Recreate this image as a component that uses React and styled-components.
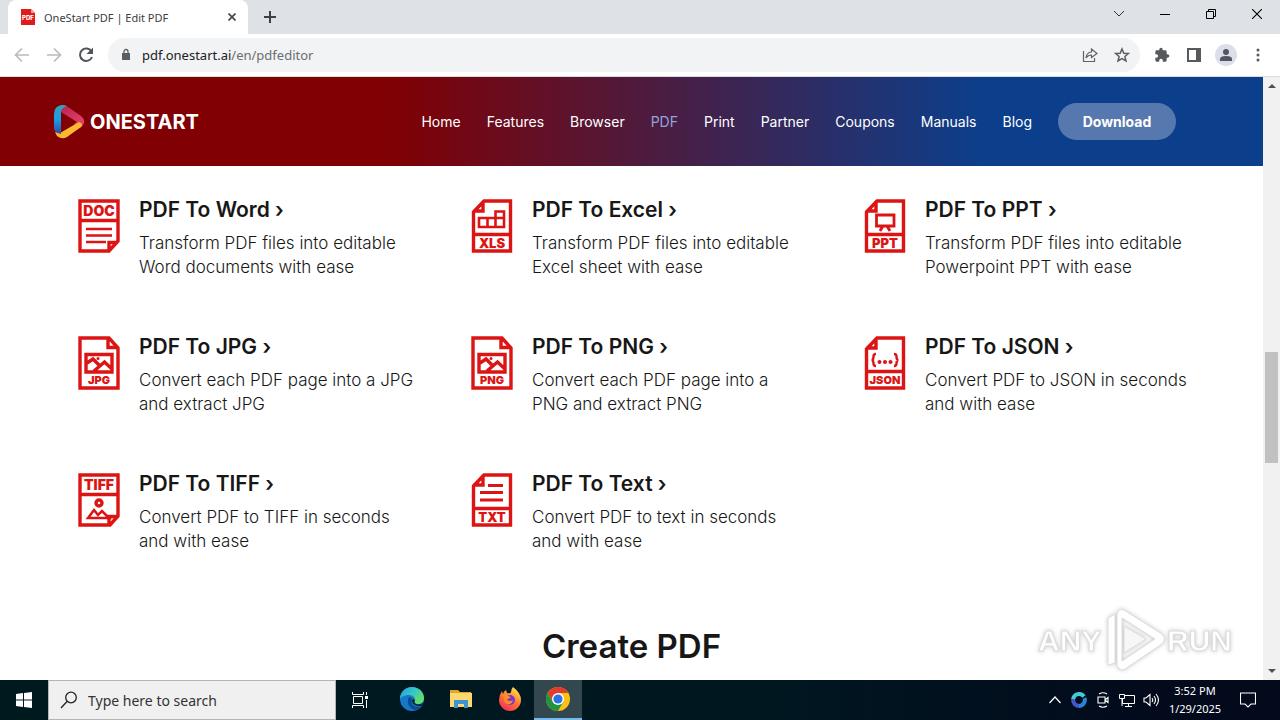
import { useState } from 'react'
import styled, { createGlobalStyle } from 'styled-components'

const RED = '#dd1414'

const navItems = ['Home', 'Features', 'Browser', 'PDF', 'Print', 'Partner', 'Coupons', 'Manuals', 'Blog']

const features = [
  { icon: 'doc', title: 'PDF To Word ›', lines: ['Transform PDF files into editable', 'Word documents with ease'] },
  { icon: 'xls', title: 'PDF To Excel ›', lines: ['Transform PDF files into editable', 'Excel sheet with ease'] },
  { icon: 'ppt', title: 'PDF To PPT ›', lines: ['Transform PDF files into editable', 'Powerpoint PPT with ease'] },
  { icon: 'jpg', title: 'PDF To JPG ›', lines: ['Convert each PDF page into a JPG', 'and extract JPG'] },
  { icon: 'png', title: 'PDF To PNG ›', lines: ['Convert each PDF page into a', 'PNG and extract PNG'] },
  { icon: 'json', title: 'PDF To JSON ›', lines: ['Convert PDF to JSON in seconds', 'and with ease'] },
  { icon: 'tiff', title: 'PDF To TIFF ›', lines: ['Convert PDF to TIFF in seconds', 'and with ease'] },
  { icon: 'txt', title: 'PDF To Text ›', lines: ['Convert PDF to text in seconds', 'and with ease'] },
]

function FileLabel({ y, size = 13, children }) {
  return (
    <text
      x="21"
      y={y}
      fontFamily="Inter, 'Liberation Sans', sans-serif"
      fontSize={size}
      fontWeight="900"
      textAnchor="middle"
      fill={RED}
      stroke="none"
    >
      {children}
    </text>
  )
}

// folded corner top left, label box at the bottom
function LeftFold({ label, size, children }) {
  return (
    <>
      <path d="M13 2H39.5V52H2.5V13Z M12 2V12H2.5 M2.5 35.500H39.5" />
      {children}
      <FileLabel y={size < 12 ? 48 : 49} size={size}>
        {label}
      </FileLabel>
    </>
  )
}

function ImageFile({ label }) {
  return (
    <>
      <path d="M2 2H31L40 12V52H2Z M30 2V11.500H40" />
      <path d="M8 18.500H34V36H8Z M9 27L15 23L21 29 M16 35L26.500 26L34 33" />
      <circle cx="20" cy="22.500" r="1.500" fill={RED} stroke="none" />
      <FileLabel y={48} size={11}>
        {label}
      </FileLabel>
    </>
  )
}

const fileShapes = {
  doc: (
    <>
      <path d="M2 2H40V42L31 52H2Z M2 21.500H40 M31 52V43.500H40" />
      <path d="M8 30H34 M8 36.500H34 M8 43H28" strokeWidth="2.500" />
      <FileLabel y={17} size={14}>DOC</FileLabel>
    </>
  ),
  tiff: (
    <>
      <path d="M2 2H40V43L32 52H2Z M2 21.500H40 M31 51V43.500H39" />
      <circle cx="21" cy="30" r="3" />
      <path d="M10 45L16 37L20 42L24 38L31 45Z" strokeWidth="2.500" />
      <FileLabel y={17} size={14}>TIFF</FileLabel>
    </>
  ),
  xls: (
    <LeftFold label="XLS" size={13}>
      <path d="M8 19H33V28H8Z M16.500 19V28 M24.500 12.500H33V28H24.500Z" strokeWidth="2.600" />
    </LeftFold>
  ),
  ppt: (
    <LeftFold label="PPT" size={13}>
      <path d="M12.500 16H30V27H12.500Z M19 27L16 32 M23 27L26 32" strokeWidth="2.800" />
    </LeftFold>
  ),
  txt: (
    <LeftFold label="TXT" size={13}>
      <path d="M17 12.500H32 M9 19.500H32 M9 27H32" strokeWidth="2.800" />
    </LeftFold>
  ),
  json: (
    <LeftFold label="JSON" size={11}>
      <path d="M12 18Q9.500 18 9.500 20.500Q9.500 24 7.500 24Q9.500 24 9.500 27.500Q9.500 30 12 30 M30 18Q32.500 18 32.500 20.500Q32.500 24 34.500 24Q32.500 24 32.500 27.500Q32.500 30 30 30" strokeWidth="2.400" />
      <g fill={RED} stroke="none">
        <circle cx="15.500" cy="26" r="2" />
        <circle cx="21" cy="26" r="2" />
        <circle cx="26.500" cy="26" r="2" />
      </g>
    </LeftFold>
  ),
  jpg: <ImageFile label="JPG" />,
  png: <ImageFile label="PNG" />,
}

function Feature({ icon, title, lines }) {
  return (
    <FeatureItem>
      <FileIcon viewBox="0 0 42 54" aria-hidden="true">
        {fileShapes[icon]}
      </FileIcon>
      <div>
        <FeatureTitle>
          <a href="#pdf">{title}</a>
        </FeatureTitle>
        <FeatureText>
          {lines[0]}
          <br />
          {lines[1]}
        </FeatureText>
      </div>
    </FeatureItem>
  )
}

function BrowserChrome() {
  const [url, setUrl] = useState('pdf.onestart.ai/en/pdfeditor')
  const [editing, setEditing] = useState(false)

  return (
    <header>
      <TabStrip>
        <Tab>
          <svg width="16" height="16" viewBox="0 0 16 16">
            <path d="M1 0H11L15 4V16H1Z" fill="#e01b1b" />
            <path d="M11 0L15 4H11Z" fill="#f79a9a" />
            <text x="8" y="11" fontSize="6" fontWeight="800" fontFamily="Inter, sans-serif" textAnchor="middle" fill="#fff">PDF</text>
          </svg>
          <TabTitle>OneStart PDF | Edit PDF</TabTitle>
          <ChromeBtn aria-label="Close tab" size={16}>
            <svg width="8" height="8" viewBox="0 0 8 8" stroke="#45494d" strokeWidth="1.700">
              <path d="M0.500 0.500L7.500 7.500M7.500 0.500L0.500 7.500" />
            </svg>
          </ChromeBtn>
        </Tab>
        <ChromeBtn aria-label="New tab" size={28}>
          <svg width="12" height="12" viewBox="0 0 12 12" stroke="#3c4043" strokeWidth="2">
            <path d="M6 0V12M0 6H12" />
          </svg>
        </ChromeBtn>
        <WindowButtons>
          <WindowBtn aria-label="Search tabs">
            <svg width="12" height="8" viewBox="0 0 12 8" fill="none" stroke="#333">
              <path d="M1 1L6 6L11 1" />
            </svg>
          </WindowBtn>
          <WindowBtn aria-label="Minimize">
            <svg width="10" height="10" viewBox="0 0 10 10" stroke="#000">
              <path d="M0 5.500H10" />
            </svg>
          </WindowBtn>
          <WindowBtn aria-label="Restore">
            <svg width="10" height="10" viewBox="0 0 10 10" fill="none" stroke="#000">
              <path d="M0.500 2.500H7.500V9.500H0.500Z M2.500 2.500V0.500H9.500V7.500H7.500" />
            </svg>
          </WindowBtn>
          <WindowBtn aria-label="Close">
            <svg width="10" height="10" viewBox="0 0 10 10" stroke="#000" strokeWidth="1.100">
              <path d="M0 0L10 10M10 0L0 10" />
            </svg>
          </WindowBtn>
        </WindowButtons>
      </TabStrip>
      <Toolbar>
        <ChromeBtn aria-label="Back" size={32}>
          <svg width="16" height="16" viewBox="0 0 16 16" fill="none" stroke="#b9bbbd" strokeWidth="1.700">
            <path d="M15 8H2M8 1.500L1.500 8L8 14.500" />
          </svg>
        </ChromeBtn>
        <ChromeBtn aria-label="Forward" size={32}>
          <svg width="16" height="16" viewBox="0 0 16 16" fill="none" stroke="#b9bbbd" strokeWidth="1.700">
            <path d="M1 8H14M8 1.500L14.500 8L8 14.500" />
          </svg>
        </ChromeBtn>
        <ChromeBtn aria-label="Reload" size={32}>
          <svg width="16" height="16" viewBox="0 0 16 16" fill="none" stroke="#50545a" strokeWidth="2">
            <path d="M13.500 4.500A6.200 6.200 0 1 0 14 10" />
            <path d="M15 0.500V7H8.500Z" fill="#50545a" stroke="none" />
          </svg>
        </ChromeBtn>
        <AddressBar>
          <svg width="10" height="14" viewBox="0 0 10 14">
            <path d="M1 5H9V12H1Z" fill="#5a5e63" />
            <path d="M3 5V3.500A2 2 0 0 1 7 3.500V5" fill="none" stroke="#5a5e63" strokeWidth="1.300" />
          </svg>
          {editing ? (
            <AddressInput
              aria-label="Address"
              autoFocus
              value={url}
              onChange={(e) => setUrl(e.target.value)}
              onBlur={() => setEditing(false)}
            />
          ) : (
            <AddressText onClick={() => setEditing(true)}>
              {url.split('/')[0]}
              <span>{url.slice(url.split('/')[0].length)}</span>
            </AddressText>
          )}
          <ChromeBtn aria-label="Share" size={32}>
            <svg width="16" height="16" viewBox="0 0 16 16" fill="none" stroke="#606469" strokeWidth="1.200">
              <path d="M1.500 4V14.500H12.500V11" />
              <path d="M4 11Q4.500 5.500 9.500 5V2L15 6.500L9.500 10.500V8Q6 8 4 11Z" />
            </svg>
          </ChromeBtn>
          <ChromeBtn aria-label="Bookmark" size={32}>
            <svg width="16" height="16" viewBox="0 0 16 16" fill="none" stroke="#5a5e63" strokeWidth="1.500">
              <path d="M8 2L9.800 6.200L14.300 6.500L10.900 9.500L12 14L8 11.600L4 14L5.100 9.500L1.700 6.500L6.200 6.200Z" />
            </svg>
          </ChromeBtn>
        </AddressBar>
        <ToolbarEnd>
          <ChromeBtn aria-label="Extensions" size={32}>
            <svg width="16" height="16" viewBox="0 0 24 24" fill="#56595e">
              <path d="M20.500 11H19V7a2 2 0 0 0-2-2h-4V3.500a2.500 2.500 0 0 0-5 0V5H4a2 2 0 0 0-2 2v3.800h1.500a2.700 2.700 0 0 1 0 5.400H2V20a2 2 0 0 0 2 2h3.800v-1.500a2.700 2.700 0 0 1 5.400 0V22H17a2 2 0 0 0 2-2v-4h1.500a2.500 2.500 0 0 0 0-5z" />
            </svg>
          </ChromeBtn>
          <ChromeBtn aria-label="Side panel" size={32}>
            <svg width="14" height="14" viewBox="0 0 14 14">
              <path d="M0 0H14V14H0Z M2 2V12H9V2Z" fill="#56595e" fillRule="evenodd" />
            </svg>
          </ChromeBtn>
          <ChromeBtn aria-label="Profile" size={32}>
            <svg width="22" height="22" viewBox="0 0 22 22">
              <circle cx="11" cy="11" r="11" fill="#dcdfe8" />
              <circle cx="11" cy="8" r="3" fill="#505662" />
              <path d="M5 17V15Q5 12 11 12T17 15V17Z" fill="#505662" />
            </svg>
          </ChromeBtn>
          <ChromeBtn aria-label="Menu" size={32}>
            <svg width="4" height="14" viewBox="0 0 4 14" fill="#56595e">
              <circle cx="2" cy="2" r="1.500" />
              <circle cx="2" cy="7" r="1.500" />
              <circle cx="2" cy="12" r="1.500" />
            </svg>
          </ChromeBtn>
        </ToolbarEnd>
      </Toolbar>
    </header>
  )
}

function SiteHeader() {
  return (
    <SiteBar>
      <Brand href="#home">
        <svg width="32" height="34" viewBox="0 0 32 34" aria-hidden="true">
          <defs>
            <linearGradient id="brandBlue" x1="0" y1="0" x2="0" y2="1">
              <stop offset="0" stopColor="#2fa3b8" />
              <stop offset="0.500" stopColor="#199fe8" />
              <stop offset="1" stopColor="#324a9c" />
            </linearGradient>
            <linearGradient id="brandPink" x1="0" y1="0" x2="1" y2="1">
              <stop offset="0" stopColor="#b3244f" />
              <stop offset="1" stopColor="#f0426d" />
            </linearGradient>
          </defs>
          <path d="M6 0Q10 -0.500 14 2L27 11Q32 15 29 20L26 23L6 9Z" fill="url(#brandPink)" />
          <path d="M1 27L6 28L25 17Q30 19 27 22L13 32Q8 35 3 31Z" fill="#fdb62f" />
          <path d="M8 0Q0 1 0 9V24Q1 28 7 29V7Q7 3 13 1Q11 0 8 0Z" fill="url(#brandBlue)" />
          <path d="M7 7L23 17L7 27Z" fill="#800004" />
        </svg>
        ONESTART
      </Brand>
      <SiteNav>
        {navItems.map((item) => (
          <NavLink key={item} href={`#${item.toLowerCase()}`} $active={item === 'PDF'}>
            {item}
          </NavLink>
        ))}
        <DownloadBtn>Download</DownloadBtn>
      </SiteNav>
    </SiteBar>
  )
}

function Watermark() {
  return (
    <WatermarkBox>
      <svg width="200" height="68" viewBox="0 0 200 68" fill="#fff" stroke="#dcdcdc" strokeLinejoin="round">
        <WatermarkText x="2" y="45">ANY</WatermarkText>
        <path d="M72 59V12L79 8V57Z" />
        <path d="M81 60V8Q82 2 88 4L126 28Q131 33 126 38L89 63Q85 66 81 60Z M86 12V55L119 33Z" fillRule="evenodd" />
        <path d="M88 20L110 33L88 47Z" fill="#f7f7f7" />
        <WatermarkText x="131" y="45">RUN</WatermarkText>
      </svg>
    </WatermarkBox>
  )
}

function Taskbar() {
  return (
    <TaskbarRow>
      <TaskBtn aria-label="Start">
        <svg width="16" height="16" viewBox="0 0 16 16" fill="#fff">
          <path d="M0 2L7 1V7.500H0Z M8 1L16 0V7.500H8Z M0 8.500H7V15L0 14Z M8 8.500H16V16L8 15Z" />
        </svg>
      </TaskBtn>
      <SearchBox>
        <svg width="18" height="18" viewBox="0 0 18 18" fill="none" stroke="#222" strokeWidth="1.300">
          <circle cx="11" cy="6.500" r="5.300" />
          <path d="M7 10.500L1 17" />
        </svg>
        <SearchInput aria-label="Search" placeholder="Type here to search" />
      </SearchBox>
      <TaskBtn aria-label="Task view">
        <svg width="16" height="16" viewBox="0 0 16 16" fill="none" stroke="#fff">
          <path d="M0.500 0V2.500H11.500V0 M0.500 16V13.500H11.500V16 M1.500 4.500H10.500V11.500H1.500Z M14.500 0V3 M14.500 8V16" />
          <path d="M13 4H16V7H13Z" fill="#fff" stroke="none" />
        </svg>
      </TaskBtn>
      <AppSlots>
        <AppSlot aria-label="Edge">
          <svg width="24" height="24" viewBox="0 0 24 24">
            <defs>
              <linearGradient id="edgeTop" x1="0" y1="0" x2="1" y2="0.600">
                <stop offset="0" stopColor="#229dd9" />
                <stop offset="0.500" stopColor="#31c5cf" />
                <stop offset="1" stopColor="#66df63" />
              </linearGradient>
            </defs>
            <circle cx="12" cy="12" r="12" fill="#1679c8" />
            <path d="M0 12C0 5 5 0 12 0C19 0 24 5 24 11C24 15 21 17 18 17C15 17 13.500 16 14.500 14C16 11 13 8 9 8C5 8 1 10 0 12Z" fill="url(#edgeTop)" />
            <path d="M9 10C6 15 9 22 15 23Q19 23 22 19Q16 21 13 18Q11 16 12 13Q12 10 9 10Z" fill="#0f4b93" />
            <path d="M13 12Q15.500 12 14.500 14.500Q14 17 19 17.500Q22 17 23.300 15.500L22 18.500Q17 20 13.500 17Q11 14 13 12Z" fill="#04202e" />
          </svg>
        </AppSlot>
        <AppSlot aria-label="File Explorer">
          <svg width="22" height="20" viewBox="0 0 22 20">
            <path d="M0 1H8L10 3H21V18H0Z" fill="#e5a52a" />
            <path d="M0 4H22V18H0Z" fill="#fbd872" />
            <path d="M4 19V11H18V19H14V15H8V19Z" fill="#3d94cf" />
          </svg>
        </AppSlot>
        <AppSlot aria-label="Firefox">
          <svg width="24" height="24" viewBox="0 0 24 24">
            <defs>
              <linearGradient id="foxFire" x1="0.800" y1="0" x2="0.200" y2="1">
                <stop offset="0" stopColor="#ffe94d" />
                <stop offset="0.500" stopColor="#ff7a2f" />
                <stop offset="1" stopColor="#f0275f" />
              </linearGradient>
            </defs>
            <path d="M15 0Q23 6 23 13A11 11 0 0 1 1 13Q1 8 4 4L5 7Q6 4 8 3L9 6Q13 7 13 5Q13 2 15 0Z" fill="url(#foxFire)" />
            <circle cx="12" cy="13" r="5" fill="#7a35d0" />
            <path d="M4 8Q8 6 11 9L13 11Q10 11 9 13Q12 15 15 13Q14 18 9 17Q5 15 6 11Z" fill="#ff8a26" />
          </svg>
        </AppSlot>
        <AppSlot aria-label="Chrome" $active>
          <svg width="24" height="24" viewBox="0 0 24 24">
            <circle cx="12" cy="12" r="12" fill="#fbc116" />
            <path d="M12 6H22.400A12 12 0 0 0 1.600 6L7 15Z" fill="#e33b2e" />
            <path d="M1.600 6A12 12 0 0 0 12 24L17.200 15L12 17L6.800 15Z" fill="#229342" />
            <circle cx="12" cy="12" r="6" fill="#fff" />
            <circle cx="12" cy="12" r="4.600" fill="#2b74e8" />
          </svg>
        </AppSlot>
      </AppSlots>
      <Tray>
        <TrayBtn aria-label="Hidden icons">
          <svg width="12" height="8" viewBox="0 0 12 8" fill="none" stroke="#fff" strokeWidth="1.200">
            <path d="M0.500 7L6 1L11.500 7" />
          </svg>
        </TrayBtn>
        <TrayBtn aria-label="OneStart">
          <svg width="16" height="16" viewBox="0 0 16 16" fill="none" strokeWidth="4">
            <path d="M8 14A6 6 0 0 0 13.500 6" stroke="#2686db" />
            <path d="M2.500 6A6 6 0 0 0 8 14" stroke="#4455c8" />
            <path d="M13 4.500A6 6 0 0 0 2.200 7" stroke="#42ccd0" />
          </svg>
        </TrayBtn>
        <TrayBtn aria-label="Meet now">
          <svg width="12" height="16" viewBox="0 0 12 16" fill="none" stroke="#fff" strokeWidth="1.100">
            <path d="M1 5H8V11H1Z M8 8L11 5.500V10.500Z M2 2Q6 -0.500 10 2 M2 14Q6 16.500 10 14" />
          </svg>
        </TrayBtn>
        <TrayBtn aria-label="Network">
          <svg width="16" height="14" viewBox="0 0 16 14" fill="none" stroke="#fff">
            <path d="M5 2.500H15.500V10.500H3.500V6 M0.500 1.500H5.500V5.500H0.500Z M3 5V13 M9.500 10.500V13.500 M6 13.500H13" />
          </svg>
        </TrayBtn>
        <TrayBtn aria-label="Volume">
          <svg width="17" height="14" viewBox="0 0 17 14" fill="none" stroke="#fff" strokeWidth="1.100">
            <path d="M1 5H3L7 1.500V12.500L3 9H1Z M9 5Q10.500 7 9 9 M11 3Q14 7 11 11 M13 1Q18 7 13 13" />
          </svg>
        </TrayBtn>
        <Clock>
          <span>3:52 PM</span>
          <span>1/29/2025</span>
        </Clock>
        <NoticeBtn aria-label="Notifications">
          <svg width="16" height="16" viewBox="0 0 16 16" fill="none" stroke="#fff" strokeWidth="1.100">
            <path d="M0.500 1H15.500V12H11L8 15L5 12H0.500Z" />
          </svg>
        </NoticeBtn>
      </Tray>
    </TaskbarRow>
  )
}

export default function App() {
  return (
    <Screen>
      <GlobalStyle />
      <BrowserChrome />
      <Viewport>
        <Page>
          <SiteHeader />
          <FeatureGrid>
            {features.map((item) => (
              <Feature key={item.icon} {...item} />
            ))}
          </FeatureGrid>
          <SectionTitle>Create PDF</SectionTitle>
        </Page>
        <Scrollbar>
          <ScrollArrow viewBox="0 0 8 4">
            <path d="M4 0L8 4H0Z" />
          </ScrollArrow>
          <ScrollTrack>
            <ScrollThumb />
          </ScrollTrack>
          <ScrollArrow viewBox="0 0 8 4">
            <path d="M0 0H8L4 4Z" />
          </ScrollArrow>
        </Scrollbar>
        <Watermark />
      </Viewport>
      <Taskbar />
    </Screen>
  )
}

const GlobalStyle = createGlobalStyle`
  * {
    box-sizing: border-box;
  }
  body {
    margin: 0;
    background-color: white;
    font-family: 'Noto Sans', sans-serif;
  }
  button {
    padding: 0;
    border: none;
    background: none;
    font-family: inherit;
    cursor: pointer;
  }
  a {
    color: inherit;
    text-decoration: none;
  }
  svg {
    display: block;
    flex-shrink: 0;
  }
`

const Screen = styled.div`
  display: flex;
  flex-direction: column;
  height: 100vh;
  overflow: hidden;
`

const TabStrip = styled.div`
  display: flex;
  align-items: center;
  height: 34px;
  padding-left: 8px;
  background-color: #dee1e6;
`

const Tab = styled.div`
  display: flex;
  align-items: center;
  gap: 8px;
  width: 240px;
  height: 34px;
  margin-right: 8px;
  padding: 0 8px 0 12px;
  border-radius: 8px 8px 0 0;
  background-color: white;
`

const TabTitle = styled.span`
  flex: 1;
  font-family: 'Noto Sans', sans-serif;
  font-size: 11px;
  color: #3c4043;
  white-space: nowrap;
`

const ChromeBtn = styled.button`
  display: flex;
  align-items: center;
  justify-content: center;
  flex-shrink: 0;
  width: ${({ size }) => size}px;
  height: ${({ size }) => size}px;
`

const WindowButtons = styled.div`
  display: flex;
  margin-left: auto;
`

const WindowBtn = styled.button`
  display: flex;
  align-items: center;
  justify-content: center;
  width: 46px;
  height: 34px;
  padding-bottom: 6px;
`

const Toolbar = styled.div`
  display: flex;
  align-items: center;
  height: 43px;
  padding: 0 6px;
  border-bottom: 1px solid #dadce0;
  background-color: white;
`

const AddressBar = styled.div`
  display: flex;
  align-items: center;
  flex: 1;
  height: 34px;
  margin: 0 6px;
  padding: 0 2px 0 13px;
  border-radius: 17px;
  background-color: #f1f3f4;
`

const AddressText = styled.div`
  flex: 1;
  margin-left: 11px;
  font-size: 13px;
  color: #202124;
  cursor: text;

  span {
    color: #6a6e73;
  }
`

const AddressInput = styled.input`
  flex: 1;
  margin-left: 11px;
  padding: 0;
  border: none;
  outline: none;
  background: none;
  font-family: inherit;
  font-size: 13px;
`

const ToolbarEnd = styled.div`
  display: flex;
`

const Viewport = styled.div`
  display: flex;
  position: relative;
  flex: 1;
  min-height: 0;
`

const Page = styled.main`
  flex: 1;
  overflow: hidden;
  font-family: Inter, sans-serif;
  color: #171717;
`

const SiteBar = styled.div`
  display: flex;
  align-items: center;
  justify-content: space-between;
  height: 89px;
  padding: 0 87px 0 54px;
  background: linear-gradient(90deg, #800004 31%, #0b3f8c 78%);
`

const Brand = styled.a`
  display: flex;
  align-items: center;
  gap: 4px;
  font-size: 20px;
  font-weight: 700;
  color: white;
`

const SiteNav = styled.nav`
  display: flex;
  align-items: center;
  gap: 26px;
`

const NavLink = styled.a`
  font-size: 14px;
  color: ${({ $active }) => ($active ? '#93a4dc' : 'white')};
`

const DownloadBtn = styled.button`
  width: 118px;
  height: 37px;
  border-radius: 19px;
  background-color: #5678ae;
  font-size: 14px;
  font-weight: 700;
  color: white;
`

const FeatureGrid = styled.ul`
  display: grid;
  grid-template-columns: repeat(3, 1fr);
  row-gap: 55px;
  margin: 0;
  padding: 31px 42px 0;
  list-style: none;
`

const FeatureItem = styled.li`
  display: flex;
  gap: 19px;
  padding-left: 36px;
`

const FileIcon = styled.svg`
  width: 42px;
  height: 54px;
  margin-top: 2px;
  fill: none;
  stroke: ${RED};
  stroke-width: 3.4;
`

const FeatureTitle = styled.h3`
  margin: 0 0 8px;
  font-size: 21px;
  font-weight: 600;
  line-height: 26px;
`

const FeatureText = styled.p`
  margin: 0;
  font-size: 17px;
  font-weight: 300;
  line-height: 24px;
  white-space: nowrap;
`

const SectionTitle = styled.h2`
  margin: 73px 0 0;
  font-size: 33px;
  font-weight: 600;
  line-height: 40px;
  text-align: center;
`

const Scrollbar = styled.div`
  display: flex;
  flex-direction: column;
  align-items: center;
  width: 17px;
  padding: 7px 0;
  background-color: #f1f1f1;
`

const ScrollArrow = styled.svg`
  width: 8px;
  height: 4px;
  fill: #505050;
`

const ScrollTrack = styled.div`
  flex: 1;
  width: 13px;
  padding-top: 264px;
`

const ScrollThumb = styled.div`
  height: 111px;
  background-color: #c1c1c1;
`

const WatermarkBox = styled.div`
  position: absolute;
  right: 44px;
  bottom: 6px;
  filter: drop-shadow(0 0 2px #c8c8c8);
  pointer-events: none;
`

const WatermarkText = styled.text`
  font-family: 'Liberation Sans', sans-serif;
  font-size: 30px;
  font-weight: 700;
`

const TaskbarRow = styled.footer`
  display: flex;
  height: 40px;
  background: linear-gradient(90deg, #00191f, #001720 60%, #020a1c 90%);
`

const TaskBtn = styled.button`
  display: flex;
  align-items: center;
  justify-content: center;
  width: 48px;
`

const AppSlots = styled.div`
  display: flex;
  padding-left: 3px;
`

const AppSlot = styled.button`
  display: flex;
  align-items: center;
  justify-content: center;
  width: ${({ $active }) => ($active ? 48 : 49)}px;
  border-bottom: 2px solid ${({ $active }) => ($active ? '#76b9ed' : 'transparent')};
  background-color: ${({ $active }) => ($active ? '#33474f' : 'transparent')};
`

const SearchBox = styled.label`
  display: flex;
  align-items: center;
  gap: 10px;
  width: 288px;
  padding-left: 11px;
  border: 1px solid #b5b5b5;
  background-color: #f0f0f0;
`

const SearchInput = styled.input`
  flex: 1;
  min-width: 0;
  padding: 0;
  border: none;
  outline: none;
  background: none;
  font-family: 'Noto Sans', sans-serif;
  font-size: 14px;

  &::placeholder {
    color: #333;
    opacity: 1;
  }
`

const Tray = styled.div`
  display: flex;
  align-items: center;
  margin-left: auto;
`

const TrayBtn = styled.button`
  display: flex;
  align-items: center;
  justify-content: center;
  width: 24px;
  height: 40px;
`

const Clock = styled.div`
  display: flex;
  flex-direction: column;
  align-items: center;
  width: 64px;
  font-size: 11px;
  line-height: 18px;
  color: white;
`

const NoticeBtn = styled.button`
  display: flex;
  align-items: center;
  justify-content: center;
  width: 53px;
  height: 40px;
  padding-right: 12px;
`
